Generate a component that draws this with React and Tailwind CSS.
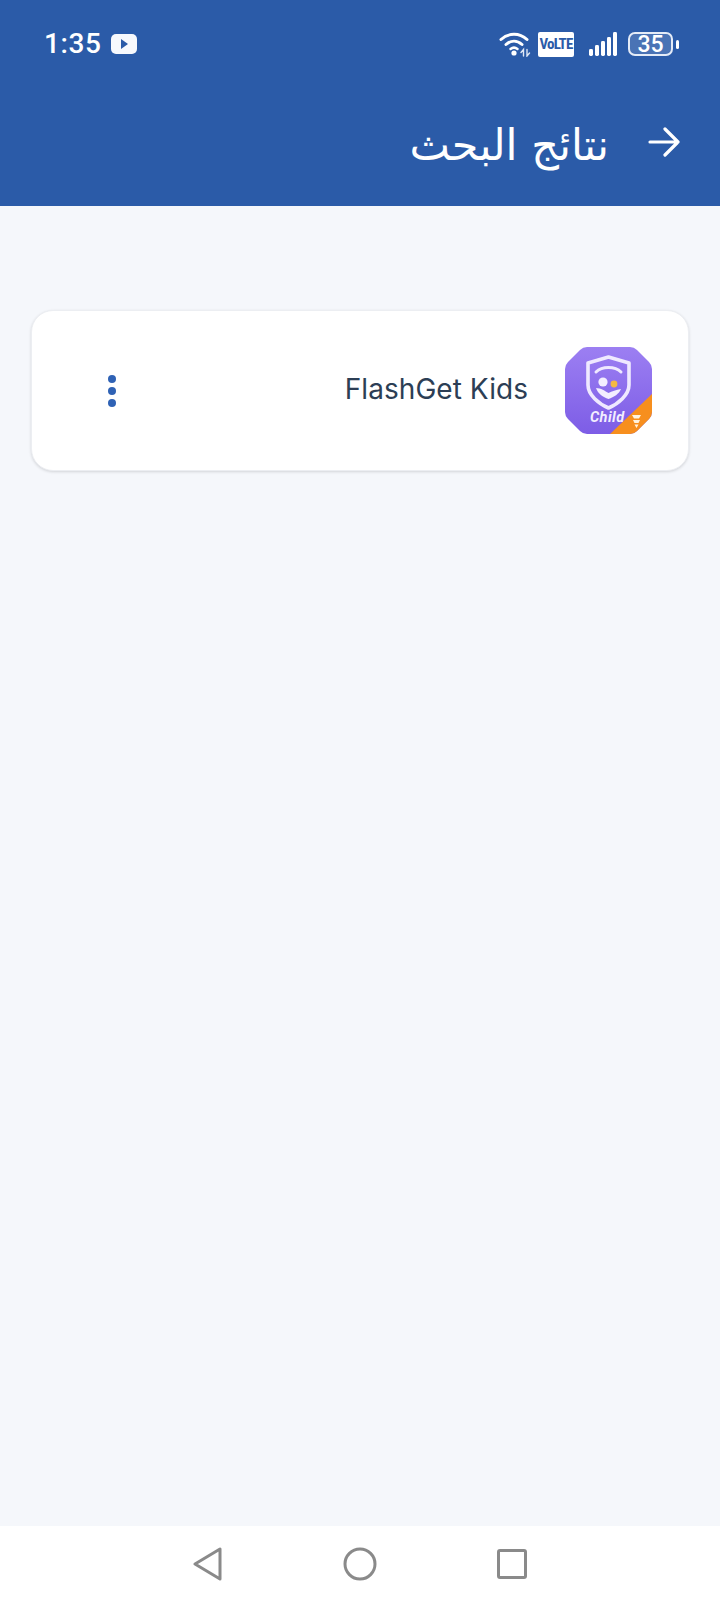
import React from 'react';

const WifiIcon = () => (
  <svg width="32" height="26" viewBox="0 0 32 26" fill="none" stroke="white" strokeLinecap="round">
    <path d="M2 8.5C9.5 1.5 20.5 1.5 28 8.5" strokeWidth="3" />
    <path d="M7 13.5C12 9 18 9 23 13.5" strokeWidth="3" />
    <path d="M11.5 18C14 16 16 16 18.5 18" strokeWidth="2.5" />
    <circle cx="15" cy="22" r="2.6" fill="white" stroke="none" />
    <path d="M24.5 25v-6.5l-2.5 3M28 18.5V25l2.5-3" strokeWidth="1.4" stroke="#dfe7f5" />
  </svg>
);

const SignalIcon = () => (
  <svg width="30" height="26" viewBox="0 0 30 26" fill="white">
    <rect x="0" y="18" width="4" height="7" rx="1.4" />
    <rect x="6" y="14" width="4" height="11" rx="1.4" />
    <rect x="12" y="10" width="4" height="15" rx="1.4" />
    <rect x="18" y="6" width="4" height="19" rx="1.4" />
    <rect x="24" y="1" width="4" height="24" rx="1.4" />
  </svg>
);

const AppIcon = () => (
  <svg width="87" height="87" viewBox="0 0 87 87" className="shrink-0">
    <defs>
      <linearGradient id="tile" x1="0" y1="0" x2="0" y2="1">
        <stop offset="0" stopColor="#9c7ff2" />
        <stop offset="1" stopColor="#7d5de6" />
      </linearGradient>
      <clipPath id="tileClip">
        <path d="M22 0H65Q69 0 72 3L84 15Q87 18 87 22V65Q87 69 84 72L72 84Q69 87 65 87H22Q18 87 15 84L3 72Q0 69 0 65V22Q0 18 3 15L15 3Q18 0 22 0Z" />
      </clipPath>
    </defs>
    <g clipPath="url(#tileClip)">
      <rect width="87" height="87" fill="url(#tile)" />
      <path d="M87 47V87H45Z" fill="#f78f1e" />
    </g>
    {/* shield with the parent and child figures */}
    <path d="M43.5 10L64 16V38C64 48 53 57 43.5 61C34 57 23 48 23 38V16Z" fill="none" stroke="#efe9ff" strokeWidth="3.6" strokeLinejoin="round" />
    <path d="M31 25C37 19 50 19 56 25" fill="none" stroke="#efe9ff" strokeWidth="3" strokeLinecap="round" />
    <circle cx="38" cy="35" r="4.6" fill="#f3eeff" />
    <circle cx="49" cy="37" r="3.4" fill="#f5b942" />
    <path d="M31 41C36 41 40 44 43.5 46C47 44 51 43 56 42C54 47 49 50 43.5 52C38 50 33 47 31 41Z" fill="#f3eeff" />
    <text x="25" y="75" fill="#f3eeff" fontSize="14.5" fontWeight="700" fontStyle="italic" fontFamily="Roboto, sans-serif" letterSpacing="0.4">Child</text>
    <path d="M67 68h9l-2 3.5h-5zM68 73h7l-1.5 3h-4zM69.5 77.5h4l-2 3.5z" fill="#fff3df" />
  </svg>
);

export default function App() {
  return (
    <div className="w-[720px] h-[1604px] flex flex-col bg-[#f5f7fb] font-['Roboto',sans-serif]">
      <header className="h-[206px] shrink-0 bg-[#2b5ba8] text-white flex flex-col">
        <div className="h-[88px] flex items-center justify-between pl-11 pr-[41px]">
          <div className="flex items-center gap-[9px]">
            <span className="text-[28px] font-medium leading-none tracking-[0.6px]">1:35</span>
            <span className="w-[26px] h-[20px] bg-[#f7f9fd] rounded-[5px] flex items-center justify-center">
              <span className="w-0 h-0 border-y-[5px] border-y-transparent border-l-[7px] border-l-[#2b5ba8] ml-px"></span>
            </span>
          </div>
          <div className="flex items-center">
            <WifiIcon />
            <span className="ml-[7px] w-[36px] h-[25px] bg-white rounded-[2px] text-[#2b5ba8] text-[15px] font-bold leading-none flex items-center justify-center font-['Roboto_Condensed','Liberation_Sans_Narrow','Roboto',sans-serif] tracking-[-0.8px]">VoLTE</span>
            <span className="ml-[15px]"><SignalIcon /></span>
            <span className="ml-[9px] w-[45px] h-[24px] border-[2.5px] border-[#e4ebf7] rounded-[7px] bg-white/15 flex items-center justify-center text-[23px] font-medium leading-none">35</span>
            <span className="ml-[3px] w-[3px] h-[9px] bg-white rounded-sm"></span>
          </div>
        </div>
        <div className="h-[108px] flex items-center justify-end pr-[40px] gap-[39px]">
          <h1 dir="rtl" className="text-[43px] leading-none font-normal font-['DejaVu_Sans',sans-serif] mt-[6px]">نتائج البحث</h1>
          <svg width="32" height="32" viewBox="0 0 32 32" fill="none" stroke="white" strokeWidth="3.2" strokeLinecap="round" strokeLinejoin="round">
            <path d="M2 16H30M17 3L30 16L17 29" />
          </svg>
        </div>
      </header>

      <main className="flex-1 px-8 pt-[104px]">
        <div className="h-[161px] -mx-px bg-white rounded-[22px] border border-[#eceef2] shadow-[0_1px_3px_rgba(0,0,0,0.14)] flex items-center justify-between pl-[76px] pr-[36px]">
          <div className="flex flex-col gap-[4px]">
            <span className="w-2 h-2 rounded-full bg-[#2f62b5]"></span>
            <span className="w-2 h-2 rounded-full bg-[#2f62b5]"></span>
            <span className="w-2 h-2 rounded-full bg-[#2f62b5]"></span>
          </div>
          <div className="flex items-center gap-[37px]">
            <span className="text-[28px] text-[#2c3e55] font-['Inter',sans-serif] tracking-[0.05px] -mt-[4px]">FlashGet Kids</span>
            <AppIcon />
          </div>
        </div>
      </main>

      <nav className="h-[78px] shrink-0 bg-white flex items-center justify-center gap-[119px] pb-[2px] pr-[1px]">
        <svg width="32" height="34" viewBox="0 0 32 34" fill="none" stroke="#8a8a8a" strokeWidth="3" strokeLinejoin="round">
          <path d="M28 2V32L3 17Z" />
        </svg>
        <svg width="34" height="34" viewBox="0 0 34 34" fill="none" stroke="#8a8a8a" strokeWidth="3">
          <circle cx="17" cy="17" r="15" />
        </svg>
        <svg width="32" height="32" viewBox="0 0 32 32" fill="none" stroke="#8a8a8a" strokeWidth="3" strokeLinejoin="round">
          <rect x="2.5" y="2.5" width="27" height="27" rx="1.5" />
        </svg>
      </nav>
    </div>
  );
}
